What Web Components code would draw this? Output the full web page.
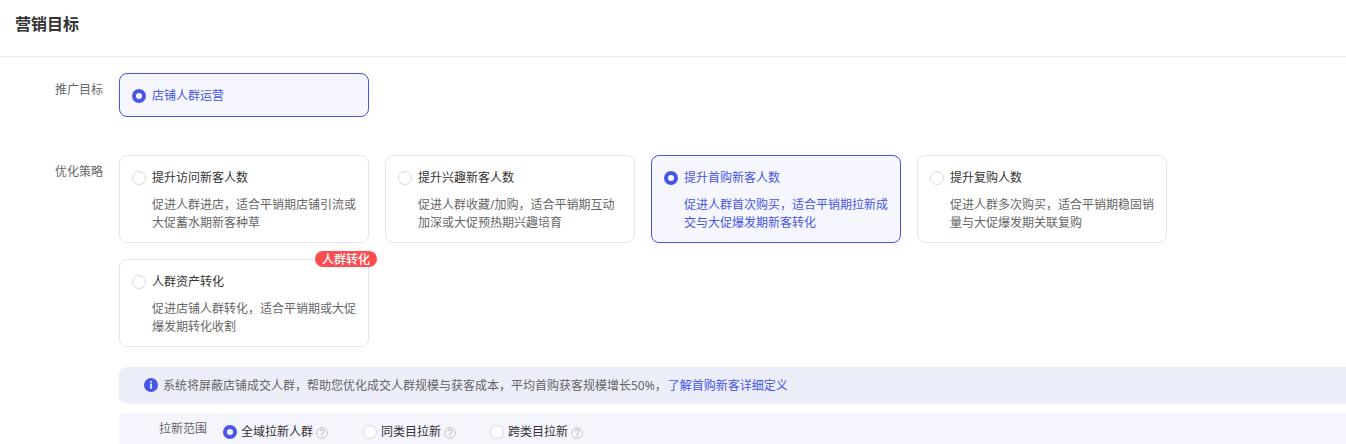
<!DOCTYPE html>
<html lang="zh-CN">

<head>
    <meta charset="UTF-8">
    <title>营销目标</title>
    <style>
        html, body { margin: 0; height: 444px; overflow: hidden; background: #fff; }
        body { font-family: "Noto Sans", "Noto Sans CJK SC", "Liberation Sans", sans-serif; font-size: 12px; color: #333; }
    </style>
    <script>
        class McHeader extends HTMLElement {
            constructor() {
                super();
                this.attachShadow({ mode: 'open' }).innerHTML = `
                    <style>
                        :host { display: flex; align-items: center; height: 46px; padding: 0 0 10px 15px; margin-bottom: 16px; box-sizing: content-box;
                            border-bottom: 1px solid #e8e8f0; font-size: 16px; font-weight: 700; color: #333; }
                    </style>
                    <slot></slot>`;
            }
        }

        class McRow extends HTMLElement {
            constructor() {
                super();
                this.attachShadow({ mode: 'open' }).innerHTML = `
                    <style>
                        :host { display: flex; align-items: flex-start; gap: 16px; }
                        .label { width: 103px; flex: none; text-align: right; line-height: 18px; padding-top: 8px; color: #666; box-sizing: border-box; }
                        .body { flex: 1; min-width: 0; }
                    </style>
                    <div class="label"></div>
                    <div class="body"><slot></slot></div>`;
            }
            connectedCallback() {
                this.shadowRoot.querySelector('.label').textContent = this.getAttribute('label');
            }
        }

        class McRadio extends HTMLElement {
            constructor() {
                super();
                this.attachShadow({ mode: 'open' }).innerHTML = `
                    <style>
                        :host { display: inline-flex; align-items: center; gap: var(--radio-gap, 6px); line-height: 18px; color: inherit; }
                        i { width: 12px; height: 12px; border-radius: 50%; background: #fff; border: 1px solid #d9d9df; flex: none; }
                        :host([checked]) i { width: 6px; height: 6px; border: 4px solid #4656e6; }
                    </style>
                    <i></i><span><slot></slot></span>`;
            }
        }

        class McCard extends HTMLElement {
            constructor() {
                super();
                this.attachShadow({ mode: 'open' }).innerHTML = `
                    <style>
                        :host { display: block; position: relative; width: 250px; height: 88px; box-sizing: border-box; padding: 13px 12px 0 12px;
                            border: 1px solid #e6e6f0; border-radius: 8px; background: #fff; color: #333; }
                        :host([active]) { border-color: #4656e6; background: #f6f6fe; color: #4656e6; }
                        .desc { margin: 7px 0 0 20px; line-height: 18px; color: #666; }
                        :host([active]) .desc { color: #4656e6; }
                        .tag { position: absolute; top: -9px; right: -9px; height: 16px; line-height: 17px; padding: 0 7px; border-radius: 8px;
                            background: #ff4d4f; color: #fff; font-weight: 500; white-space: nowrap; }
                    </style>
                    <mc-radio></mc-radio>
                    <div class="desc"><slot></slot></div>
                    <div class="tag" hidden></div>`;
            }
            connectedCallback() {
                const radio = this.shadowRoot.querySelector('mc-radio');
                radio.textContent = this.getAttribute('heading');
                if (this.hasAttribute('active')) radio.setAttribute('checked', '');
                if (this.hasAttribute('compact')) {
                    this.style.height = '44px';
                    this.shadowRoot.querySelector('.desc').remove();
                }
                const tag = this.shadowRoot.querySelector('.tag');
                if (this.getAttribute('tag')) {
                    tag.textContent = this.getAttribute('tag');
                    tag.hidden = false;
                } else {
                    tag.remove();
                }
            }
        }

        class McGrid extends HTMLElement {
            constructor() {
                super();
                this.attachShadow({ mode: 'open' }).innerHTML = `
                    <style>
                        :host { display: grid; grid-template-columns: repeat(4, 250px); gap: 16px; }
                    </style>
                    <slot></slot>`;
            }
        }

        class McAlert extends HTMLElement {
            constructor() {
                super();
                this.attachShadow({ mode: 'open' }).innerHTML = `
                    <style>
                        :host { display: flex; align-items: center; gap: 5px; height: 37px; padding: 0 0 0 25px; margin-top: 20px; box-sizing: border-box;
                            background: #ebedf9; border-radius: 8px 0 0 8px; color: #666; line-height: 18px; }
                        svg { flex: none; margin-top: -1px; }
                        ::slotted(a) { color: #4656e6; text-decoration: none; margin-left: 1px; }
                    </style>
                    <svg width="14" height="14" viewBox="0 0 14 14"><circle cx="7" cy="7" r="7" fill="#4656e6"/><rect x="6.2" y="3" width="1.6" height="1.6" fill="#fff"/><rect x="6.2" y="5.6" width="1.6" height="5.2" fill="#fff"/></svg>
                    <span><slot></slot></span>`;
            }
        }

        class McHelp extends HTMLElement {
            constructor() {
                super();
                this.attachShadow({ mode: 'open' }).innerHTML = `
                    <style>
                        :host { display: inline-block; width: 12px; height: 12px; margin-left: 3px; vertical-align: -3px; }
                        svg { display: block; }
                        text { font: 10px "Liberation Sans", sans-serif; fill: #b5b5b5; }
                    </style>
                    <svg width="12" height="12" viewBox="0 0 12 12"><circle cx="6" cy="6" r="5.5" fill="none" stroke="#c8c8c8"/><text x="6" y="9.5" text-anchor="middle">?</text></svg>`;
            }
        }

        class McRange extends HTMLElement {
            constructor() {
                super();
                this.attachShadow({ mode: 'open' }).innerHTML = `
                    <style>
                        :host { display: flex; align-items: flex-start; height: 40px; margin-top: 9px; padding: 0 0 0 40px; box-sizing: border-box;
                            background: #f5f5fd; border-radius: 8px 0 0 8px; color: #333; --radio-gap: 4px; }
                        .name { width: 64px; flex: none; line-height: 18px; padding-top: 7px; color: #666; }
                        .opts { display: flex; gap: 34px; padding-top: 10px; }
                        ::slotted(:first-child) { margin-right: 1px; }
                    </style>
                    <div class="name"></div>
                    <div class="opts"><slot></slot></div>`;
            }
            connectedCallback() {
                this.shadowRoot.querySelector('.name').textContent = this.getAttribute('label');
            }
        }

        [['mc-header', McHeader], ['mc-row', McRow], ['mc-radio', McRadio], ['mc-card', McCard], ['mc-grid', McGrid],
         ['mc-alert', McAlert], ['mc-help', McHelp], ['mc-range', McRange]].forEach(([n, c]) => customElements.define(n, c));
    </script>
</head>

<body>
    <mc-header>营销目标</mc-header>

    <mc-row label="推广目标" style="margin-bottom:38px">
        <mc-card compact active heading="店铺人群运营"></mc-card>
    </mc-row>

    <mc-row label="优化策略">
        <mc-grid>
            <mc-card heading="提升访问新客人数">促进人群进店，适合平销期店铺引流或大促蓄水期新客种草</mc-card>
            <mc-card heading="提升兴趣新客人数">促进人群收藏/加购，适合平销期互动加深或大促预热期兴趣培育</mc-card>
            <mc-card active heading="提升首购新客人数">促进人群首次购买，适合平销期拉新成交与大促爆发期新客转化</mc-card>
            <mc-card heading="提升复购人数">促进人群多次购买，适合平销期稳固销量与大促爆发期关联复购</mc-card>
            <mc-card heading="人群资产转化" tag="人群转化">促进店铺人群转化，适合平销期或大促爆发期转化收割</mc-card>
        </mc-grid>
        <mc-alert>系统将屏蔽店铺成交人群，帮助您优化成交人群规模与获客成本，平均首购获客规模增长50%，<a href="#">了解首购新客详细定义</a></mc-alert>
        <mc-range label="拉新范围">
            <mc-radio checked>全域拉新人群<mc-help></mc-help></mc-radio>
            <mc-radio>同类目拉新<mc-help></mc-help></mc-radio>
            <mc-radio>跨类目拉新<mc-help></mc-help></mc-radio>
        </mc-range>
    </mc-row>
</body>

</html>
